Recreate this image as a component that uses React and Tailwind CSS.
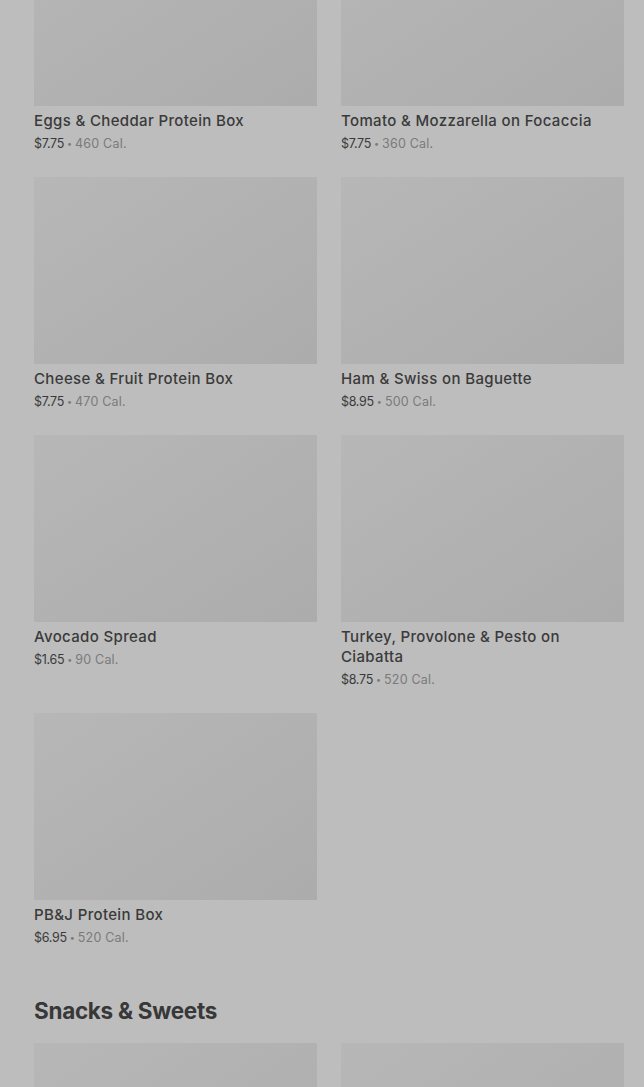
const sandwiches = [
  { name: 'Eggs & Cheddar Protein Box', price: '$7.75', cal: '460 Cal.' },
  { name: 'Tomato & Mozzarella on Focaccia', price: '$7.75', cal: '360 Cal.' },
  { name: 'Cheese & Fruit Protein Box', price: '$7.75', cal: '470 Cal.' },
  { name: 'Ham & Swiss on Baguette', price: '$8.95', cal: '500 Cal.' },
  { name: 'Avocado Spread', price: '$1.65', cal: '90 Cal.' },
  { name: 'Turkey, Provolone & Pesto on Ciabatta', price: '$8.75', cal: '520 Cal.' },
  { name: 'PB&J Protein Box', price: '$6.95', cal: '520 Cal.' },
];

function Item({ item }) {
  return (
    <div className="flex flex-col">
      <div className="h-[187px] w-full bg-gradient-to-br from-[#b7b7b7] to-[#acacac]" />
      <p className="mt-[5px] pr-[30px] text-[15px] leading-[20px] font-medium text-[#3a3a3a] tracking-[0.35px]">{item.name}</p>
      <p className="mt-[3px] h-[20px] flex items-center text-[12.5px] text-[#7a7a7a]">
        <span className="text-[#3a3a3a] tracking-[-0.3px]">{item.price}</span>
        <span className="mx-[3px] text-[9px]">•</span>
        <span className="tracking-[0.2px]">{item.cal}</span>
      </p>
    </div>
  );
}

export default function App() {
  return (
    <div className="min-h-[1087px] bg-[#bdbdbd] pl-[34px] pr-[20px] overflow-hidden" style={{ fontFamily: 'Inter, "Noto Sans", sans-serif' }}>
      <div className="-mt-[81px] grid grid-cols-2 gap-x-[24px] gap-y-[23px]">
        {sandwiches.map((s) => <Item key={s.name} item={s} />)}
      </div>

      <h2 className="mt-[48px] text-[22.5px] leading-[30px] font-bold text-[#383838] tracking-[-0.3px]">Snacks &amp; Sweets</h2>
      <div className="mt-[17px] grid grid-cols-2 gap-x-[24px]">
        <div className="h-[187px] bg-gradient-to-br from-[#b7b7b7] to-[#acacac]" />
        <div className="h-[187px] bg-gradient-to-br from-[#b7b7b7] to-[#acacac]" />
      </div>
    </div>
  );
}
